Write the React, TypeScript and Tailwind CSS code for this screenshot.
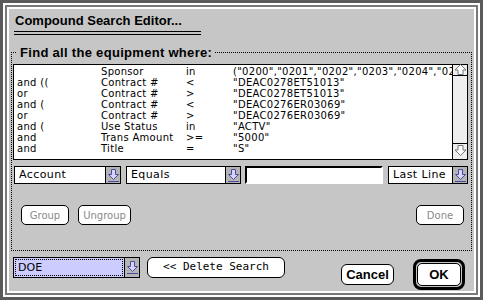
import React from "react";

const rows: [string, string, string, string][] = [
  ["", "Sponsor", "in", '("0200","0201","0202","0203","0204","0205","0206")'],
  ["and ((", "Contract #", "<", '"DEAC0278ET51013"'],
  ["or", "Contract #", ">", '"DEAC0278ET51013"'],
  ["and (", "Contract #", "<", '"DEAC0276ER03069"'],
  ["or", "Contract #", ">", '"DEAC0276ER03069"'],
  ["and (", "Use Status", "in", '"ACTV"'],
  ["and", "Trans Amount", ">=", '"5000"'],
  ["and", "Title", "=", '"S"'],
];

const DownArrow = () => (
  <svg width="13" height="15" viewBox="0 0 13 15">
    <path d="M4.5 1.5h4v5h3l-5 5-5-5h3z" fill="#d4d4ff" stroke="#4b4b9c" strokeWidth="1" />
    <line x1="1" y1="13.5" x2="12" y2="13.5" stroke="#4b4b9c" strokeWidth="1" />
  </svg>
);

const ScrollUp = () => (
  <svg width="13" height="11" viewBox="0 0 13 11">
    <path d="M6.5 0.5L12 6h-3v4.5H4V6H1z" fill="#fff" stroke="#777" strokeWidth="1" />
  </svg>
);
const ScrollDown = () => (
  <svg width="13" height="11" viewBox="0 0 13 11">
    <path d="M6.5 10.5L12 5h-3V0.5H4V5H1z" fill="#fff" stroke="#777" strokeWidth="1" />
  </svg>
);

const Popup = ({ label, w }: { label: string; w: string }) => (
  <div className={`flex h-[18px] border border-black bg-white ${w}`}>
    <div className="flex-1 pl-[4px] text-[11px] leading-[16px] tracking-[0.4px] text-black">{label}</div>
    <div className="flex w-[15px] items-center justify-center border-l border-black bg-[#b4b4b4]">
      <DownArrow />
    </div>
  </div>
);

export default function App() {
  const geneva = { fontFamily: '"DejaVu Sans", sans-serif' };
  const bold = { fontFamily: '"Liberation Sans", Arial, sans-serif' };
  return (
    <div className="h-[300px] w-[483px] bg-[#5a5a5a] p-[3px]">
      <div className="h-full w-full border-2 border-white">
        <div className="h-full w-full border-2 border-[#787878]">
          <div className="h-full w-full border-2 border-white">
            <div className="flex h-full w-full flex-col bg-[#c6c6c6]" style={geneva}>
              {/* title */}
              <div
                className="ml-[6px] mt-[4px] h-[16px] text-[13px] font-bold leading-[16px] text-black"
                style={bold}
              >
                Compound Search Editor...
              </div>
              <div className="ml-[5px] mt-[2px] h-px w-[187px] bg-black" />
              <div className="ml-[5px] mt-[2px] h-px w-[187px] bg-black" />

              {/* group box */}
              <div className="ml-[2px] mt-[17px] flex h-[199px] w-[461px] flex-col border border-dotted border-black pl-px">
                <div
                  className="-mt-[8px] ml-[4px] h-[16px] self-start bg-[#c6c6c6] px-[3px] text-[13px] font-bold leading-[16px] tracking-[0.3px] text-black"
                  style={bold}
                >
                  Find all the equipment where:
                </div>
                {/* list */}
                <div className="mt-[3px] flex h-[96px] w-[455px] border border-black bg-white">
                  <div className="flex-1 overflow-hidden pt-[1px]">
                    {rows.map((r, i) => (
                      <div
                        key={i}
                        className="flex h-[11px] whitespace-nowrap text-[10px] leading-[11px] tracking-[0.3px] text-black"
                      >
                        <div className="w-[87px] shrink-0 pl-[3px]">{r[0]}</div>
                        <div className="w-[85px] shrink-0">{r[1]}</div>
                        <div className="w-[47px] shrink-0">{r[2]}</div>
                        <div className="shrink-0">{r[3]}</div>
                      </div>
                    ))}
                  </div>
                  <div className="flex w-[15px] flex-col border-l border-black bg-[#eeeeee]">
                    <div className="flex h-[11px] items-end justify-center border-b border-black">
                      <ScrollUp />
                    </div>
                    <div className="flex-1" />
                    <div className="flex h-[16px] items-start justify-center border-t border-black pt-[1px]">
                      <ScrollDown />
                    </div>
                  </div>
                </div>

                {/* controls row */}
                <div className="mt-[6px] flex items-start">
                  <div className="ml-[1px]">
                    <Popup label="Account" w="w-[107px]" />
                  </div>
                  <div className="ml-[5px]">
                    <Popup label="Equals" w="w-[115px]" />
                  </div>
                  <div className="ml-[4px] h-[18px] w-[138px] border-2 border-b-white border-l-black border-r-white border-t-black bg-white" />
                  <div className="ml-[5px]">
                    <Popup label="Last Line" w="w-[80px]" />
                  </div>
                </div>

                {/* buttons row */}
                <div className="mt-[21px] flex items-start">
                  <div className="ml-[8px] flex h-[20px] w-[48px] items-center justify-center rounded-[5px] border border-black bg-white text-[10px] text-[#8a8a8a]">
                    Group
                  </div>
                  <div className="ml-[9px] flex h-[20px] w-[53px] items-center justify-center rounded-[5px] border border-black bg-white text-[10px] text-[#8a8a8a]">
                    Ungroup
                  </div>
                  <div className="ml-auto mr-[7px] flex h-[20px] w-[48px] items-center justify-center rounded-[5px] border border-black bg-white text-[10px] text-[#8a8a8a]">
                    Done
                  </div>
                </div>
              </div>

              {/* bottom row */}
              <div className="mt-[6px] flex items-start">
                <div className="ml-[4px] flex h-[21px] w-[127px] border border-black bg-[#ccccff]">
                  <div className="m-[1px] flex-1 border border-dotted border-black pl-[2px] text-[11px] leading-[15px] text-black">
                    DOE
                  </div>
                  <div className="flex w-[15px] items-center justify-center border-l border-black bg-[#b4b4b4]">
                    <DownArrow />
                  </div>
                </div>
                <div
                  className="ml-[7px] flex h-[21px] w-[138px] items-center justify-center rounded-[6px] border border-black bg-white text-[11px] text-black"
                  style={{ fontFamily: '"DejaVu Sans Mono", monospace' }}
                >
                  {"<< Delete Search"}
                </div>
                <div
                  className="ml-[56px] mt-[7px] flex h-[21px] w-[53px] items-center justify-center rounded-[6px] border border-black bg-white text-[13px] font-bold text-black"
                  style={bold}
                >
                  Cancel
                </div>
                <div className="ml-[19px] mt-[2px] flex h-[31px] w-[52px] items-center justify-center rounded-[8px] border-[3px] border-black bg-[#c6c6c6] p-px">
                  <div
                    className="flex h-full w-full items-center justify-center rounded-[5px] border border-black bg-white text-[13px] font-bold text-black"
                    style={bold}
                  >
                    OK
                  </div>
                </div>
              </div>
            </div>
          </div>
        </div>
      </div>
    </div>
  );
}
